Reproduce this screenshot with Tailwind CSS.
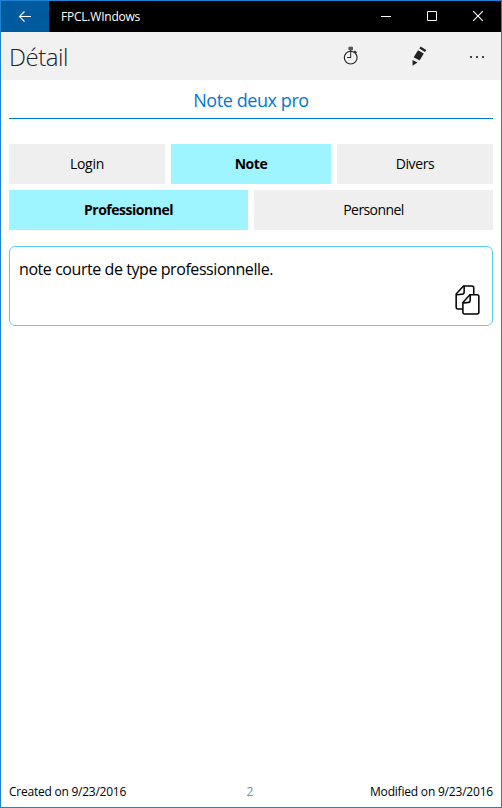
<!DOCTYPE html>
<html lang="fr">
<head>
<meta charset="utf-8">
<title>FPCL.WIndows</title>
<script src="https://cdn.jsdelivr.net/npm/@tailwindcss/browser@4"></script>
</head>
<body class="bg-white">
<div class="flex h-[808px] w-[502px] flex-col overflow-hidden border border-[#1c82d4] bg-white font-['Open_Sans','Noto_Sans',sans-serif] text-black">
  <header class="flex h-[31px] shrink-0 items-center bg-black text-white">
    <button class="flex h-full w-12 items-center justify-center bg-[#005a9e]" aria-label="Retour">
      <svg class="-mt-0.5" width="14" height="12" viewBox="0 0 14 12" fill="none" stroke="currentColor" stroke-width="1.1"><path d="M13 6.500H1.500M6.500 1.500L1.500 6.500l5 5"/></svg>
    </button>
    <span class="ml-3 grow whitespace-nowrap text-[12px] leading-[30px] tracking-[-0.22px]">FPCL.WIndows</span>
    <div class="flex h-full">
      <button class="flex w-[46px] items-center justify-center" aria-label="Réduire"><svg class="-mt-px" width="10" height="10" shape-rendering="crispEdges"><path d="M0 5h10v1H0z" fill="currentColor"/></svg></button>
      <button class="flex w-[46px] items-center justify-center" aria-label="Agrandir"><svg class="-mt-px" width="10" height="10" fill="none" stroke="currentColor"><path d="M.5.5h9v9h-9z"/></svg></button>
      <button class="flex w-[46px] items-center justify-center" aria-label="Fermer"><svg class="-mt-px" width="10" height="10" fill="none" stroke="currentColor" stroke-width="1.1"><path d="M0 0l10 10M10 0L0 10"/></svg></button>
    </div>
  </header>

  <div class="flex h-12 shrink-0 items-center bg-[#f1f1f1] pl-2 text-[#222]">
    <h1 class="grow pt-0.5 text-[24px] leading-[48px] font-light tracking-[-0.45px]">Détail</h1>
    <button class="flex h-full w-[68px] items-center justify-center" aria-label="Chronomètre">
      <svg width="16" height="20" viewBox="0 0 16 20" fill="none" stroke="currentColor"><circle cx="7.700" cy="11.600" r="6.400" stroke-width="1.150"/><path d="M7.700 4v7.700M4.200 11.500H8" stroke-width="1"/><path d="M5.900 1.200h3.600v2.600H5.900z" fill="#555" stroke="#444" stroke-width=".8"/><path d="M11.300 5.200l2.200 1.800" stroke-width="1.600"/></svg>
    </button>
    <button class="flex h-full w-[68px] items-center justify-center" aria-label="Modifier">
      <svg width="16" height="20" viewBox="0 0 16 20" fill="currentColor"><path d="M9.600.5l5.600 3.400-1.200 2-5.600-3.400zM7 4.300l5.800 3.300-4.200 7-5.900-3.300zM1.500 14l5 2.400-4.900 3.400z"/></svg>
    </button>
    <button class="flex h-full w-12 items-center justify-center gap-1 pt-0.5" aria-label="Plus">
      <span class="size-0.5 bg-[#444]"></span><span class="size-0.5 bg-[#444]"></span><span class="size-0.5 bg-[#444]"></span>
    </button>
  </div>

  <main class="flex grow flex-col px-2">
    <h2 class="h-[39px] border-b border-[#0078d7] text-center text-[18px] leading-[41px] tracking-[-0.42px] whitespace-nowrap text-[#0078d7]">Note deux pro</h2>
    <div class="mt-[25px] flex h-10 gap-1.5 text-[14px]">
      <button class="w-[156px] bg-[#efefef] pb-0.5 tracking-[-0.25px]">Login</button>
      <button class="w-[160px] bg-[#9ff5ff] pb-0.5 font-bold tracking-[-0.45px]">Note</button>
      <button class="w-[156px] bg-[#efefef] pb-0.5 tracking-[-0.4px]">Divers</button>
    </div>
    <div class="mt-1.5 grid h-10 grid-cols-2 gap-1.5 text-[14px]">
      <button class="bg-[#9ff5ff] pb-0.5 font-bold tracking-[-0.48px]">Professionnel</button>
      <button class="bg-[#efefef] pb-0.5 tracking-[-0.58px]">Personnel</button>
    </div>
    <section class="mt-4 flex h-20 flex-col justify-between rounded-[6px] border border-[#5bcdf5] pt-2.5 pr-3 pb-2.5 pl-[9px]">
      <p class="text-[16px] leading-6 tracking-[-0.43px] whitespace-nowrap">note courte de type professionnelle.</p>
      <button class="self-end" aria-label="Copier">
        <svg class="block" width="25" height="30" viewBox="0 0 26 30" preserveAspectRatio="none" fill="none" stroke="currentColor" stroke-width="1.600" stroke-linejoin="round" stroke-linecap="round"><path d="M7.500 24H3q-1.800 0-1.800-2V9L8.800 1H17.500q2 0 2 2V9.500"/><path d="M9.500 1.500V7q0 2-2 2.200L1.800 9.800"/><path d="M15.500 9.800H23q1.800 0 1.800 2V27q0 2-1.800 2H10q-1.800 0-1.800-2V17.500z" fill="white"/><path d="M15.800 10.500V15.500q0 1.700-1.700 1.900L9 18"/></svg>
      </button>
    </section>
    <footer class="mt-auto grid h-[31px] grid-cols-[1fr_auto_1fr] text-[12px] leading-[31px] whitespace-nowrap">
      <span class="tracking-[-0.24px]">Created on 9/23/2016</span>
      <span class="pr-0.5 text-[#888]">2</span>
      <span class="text-right tracking-[-0.2px]">Modified on 9/23/2016</span>
    </footer>
  </main>
</div>
</body>
</html>
